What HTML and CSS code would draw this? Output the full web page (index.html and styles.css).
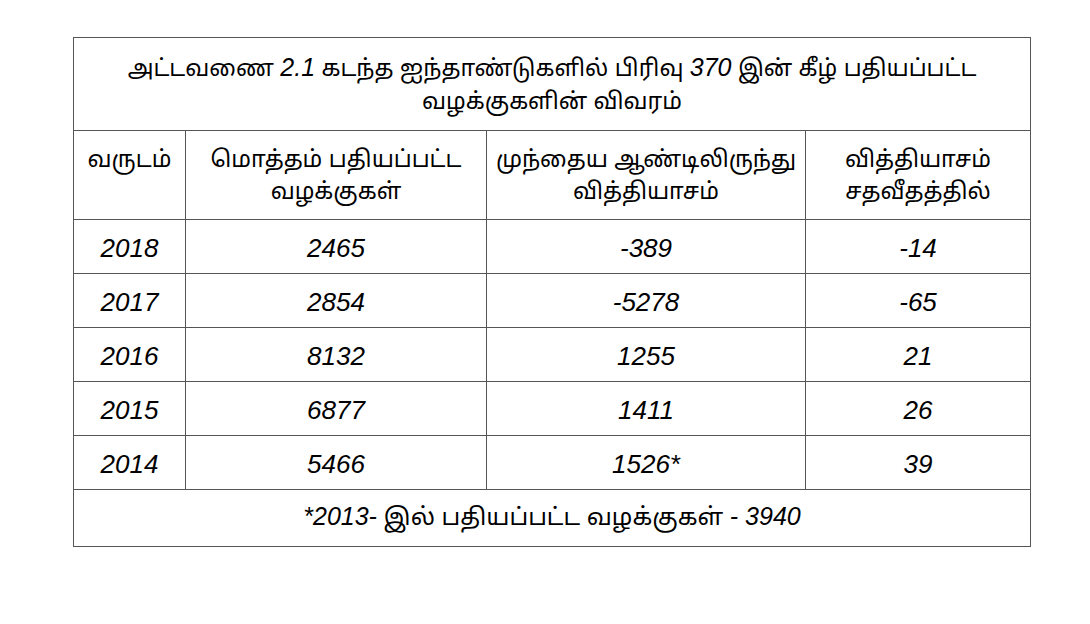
FILE: index.html
```html
<!DOCTYPE html>
<html lang="ta">
<head>
<meta charset="utf-8">
<title>அட்டவணை 2.1</title>
<link rel="stylesheet" href="styles.css">
</head>
<body>
<table class="cases">
  <colgroup>
    <col class="c-year">
    <col class="c-total">
    <col class="c-diff">
    <col class="c-pct">
  </colgroup>
  <tr class="title-row">
    <td colspan="4">அட்டவணை <i>2.1</i> கடந்த ஐந்தாண்டுகளில் பிரிவு <i>370</i> இன் கீழ் பதியப்பட்ட<br>வழக்குகளின் விவரம்</td>
  </tr>
  <tr class="head-row">
    <td>வருடம்</td>
    <td>மொத்தம் பதியப்பட்ட<br>வழக்குகள்</td>
    <td>முந்தைய ஆண்டிலிருந்து<br>வித்தியாசம்</td>
    <td>வித்தியாசம்<br>சதவீதத்தில்</td>
  </tr>
  <tr class="data-row"><td>2018</td><td>2465</td><td>-389</td><td>-14</td></tr>
  <tr class="data-row"><td>2017</td><td>2854</td><td>-5278</td><td>-65</td></tr>
  <tr class="data-row"><td>2016</td><td>8132</td><td>1255</td><td>21</td></tr>
  <tr class="data-row"><td>2015</td><td>6877</td><td>1411</td><td>26</td></tr>
  <tr class="data-row"><td>2014</td><td>5466</td><td>1526*</td><td>39</td></tr>
  <tr class="foot-row">
    <td colspan="4"><i>*2013-</i> இல் பதியப்பட்ட வழக்குகள் <i>- 3940</i></td>
  </tr>
</table>
</body>
</html>
```
FILE: styles.css
```css
html, body {
  margin: 0;
  padding: 0;
  background: #ffffff;
}
body {
  padding: 37px 0 0 73px;
  font-family: "Liberation Sans", "Noto Sans Tamil", "Lohit Tamil", "Noto Sans", sans-serif;
  color: #000;
}
.cases {
  border-collapse: collapse;
  width: 957px;
  table-layout: fixed;
}
.cases td {
  border: 1px solid #555;
  text-align: center;
  padding: 0;
}
.c-year { width: 112px; }
.c-total { width: 301px; }
.c-diff { width: 319px; }
.c-pct { width: 225px; }
.title-row td {
  height: 92px;
  font-size: 23px;
  line-height: 33px;
}
.title-row i {
  font-size: 25px;
}
.head-row td {
  height: 89px;
  font-size: 23px;
  line-height: 32px;
  vertical-align: top;
  padding-top: 12px;
  box-sizing: border-box;
}
.data-row td {
  height: 51px;
  font-size: 26px;
  line-height: 30px;
  font-style: italic;
  padding-top: 2px;
}
.foot-row td {
  height: 56px;
  font-size: 24px;
}
.foot-row i {
  font-size: 25px;
}
.cases i {
  font-style: italic;
}
```
